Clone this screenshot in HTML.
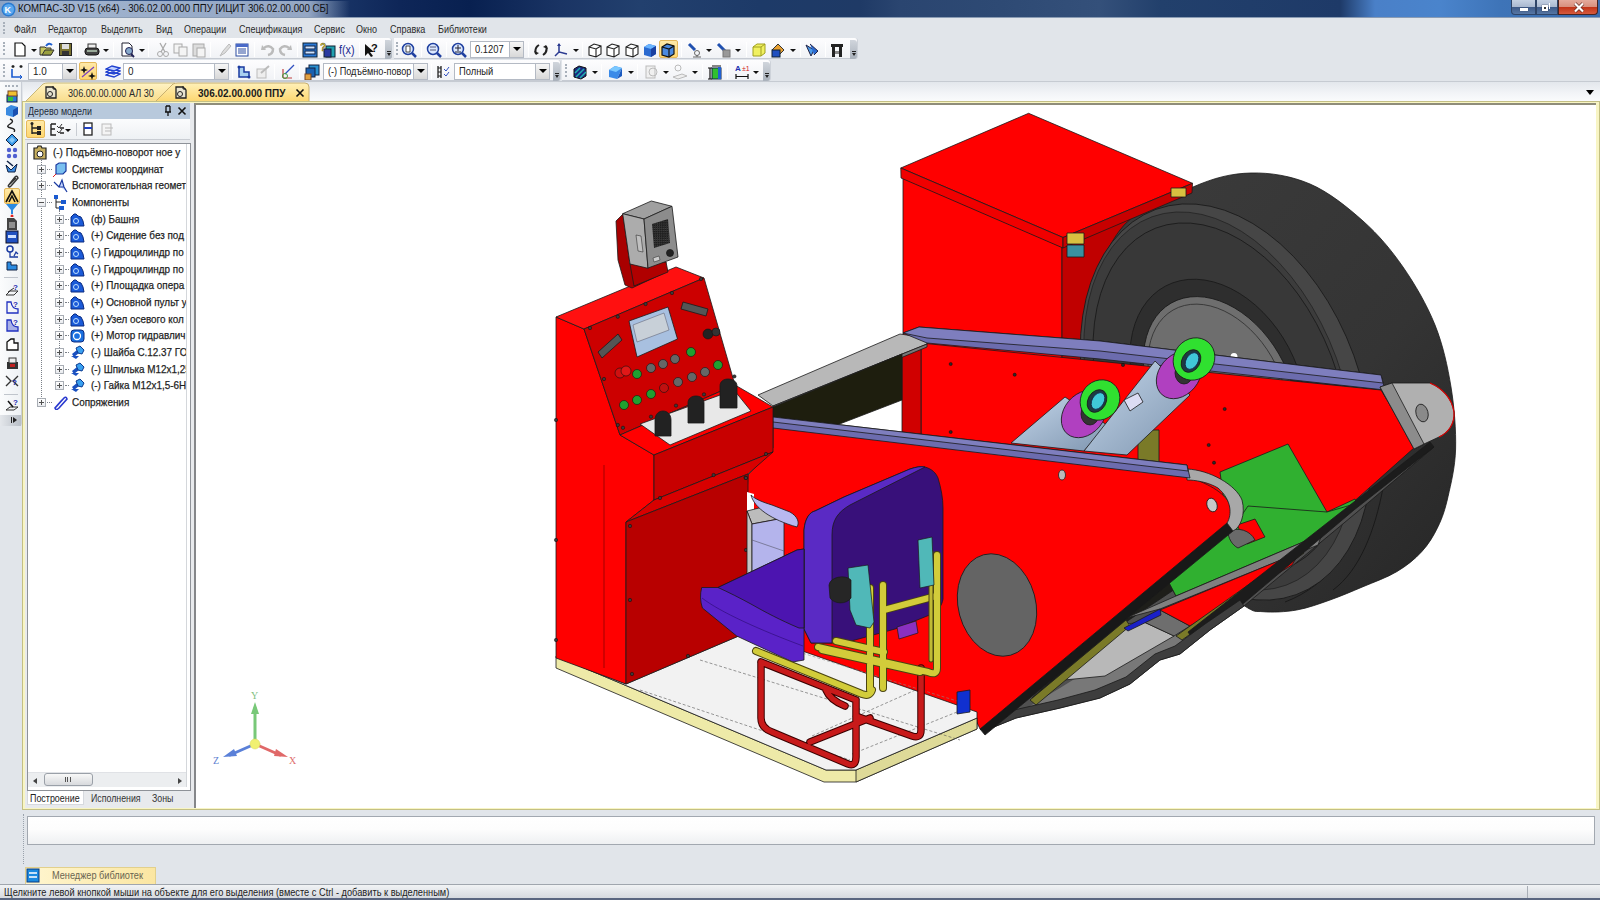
<!DOCTYPE html>
<html><head><meta charset="utf-8"><style>
*{margin:0;padding:0;box-sizing:border-box}
html,body{width:1600px;height:900px;overflow:hidden;background:#e1e5ea;font-family:"Liberation Sans",sans-serif;font-size:11px;color:#000}
.a{position:absolute}
.nw{white-space:nowrap;line-height:1}
.tr .nw{-webkit-text-stroke:0.25px currentColor}
.tb{position:absolute;height:21px;background:linear-gradient(#fdfdfe,#f1f3f6);border-bottom:1px solid #c6cbd3;border-right:1px solid #cdd2d9;border-radius:0 3px 3px 0}
.grip{position:absolute;width:2px;height:13px;border-left:2px dotted #a8b0ba}
.sep{position:absolute;width:1px;height:15px;background:#c8ccd2;border-right:1px solid #fff}
.combo{position:absolute;height:17px;background:#fff;border:1px solid #b4bac4;white-space:nowrap;overflow:hidden}
.combo b{position:absolute;right:0;top:0;width:14px;height:15px;background:linear-gradient(#f6f6f6,#d8d8d8);border-left:1px solid #b4bac4}
.combo b:after{content:"";position:absolute;left:3px;top:5px;border:4px solid transparent;border-top:4px solid #000;border-bottom:0}
.dd{position:absolute;width:0;height:0;border:3px solid transparent;border-top:3px solid #111;border-bottom:0}
.hl{position:absolute;background:linear-gradient(#ffe9a8,#ffd76e);border:1px solid #e5b85a;border-radius:2px}
.pm{position:absolute;width:9px;height:9px;border:1px solid #a8adb4;background:linear-gradient(#fff,#e8eaee)}
.pm:before{content:"";position:absolute;left:1px;top:3px;width:5px;height:1px;background:#505050}
.pm.p:after{content:"";position:absolute;left:3px;top:1px;width:1px;height:5px;background:#505050}
</style></head><body>
<div class="a" style="left:0;top:0;width:1600px;height:18px;background:linear-gradient(90deg,#4a6c9c 0.00%,#3b5a88 6.25%,#26467a 12.50%,#1a3668 20.62%,#0e2658 25.00%,#082050 29.38%,#1a3464 35.00%,#22406e 40.00%,#1d3a68 47.50%,#1f3a66 53.75%,#2a4570 56.25%,#2e4a74 62.50%,#34507a 68.75%,#22406c 72.50%,#1e3a68 83.75%,#4a80c8 85.94%,#4a84cc 90.00%,#3e74b8 93.75%,#3a6cae 100.00%)"></div>
<div class="a" style="left:0;top:1px;width:350px;height:16px;background:linear-gradient(90deg,rgba(190,205,228,0.55),rgba(200,214,234,0.7) 8%,rgba(200,214,234,0.7) 88%,rgba(200,214,234,0) 100%)"></div>
<div class="a" style="left:0;top:17px;width:1600px;height:1px;background:#8a9cb4"></div>
<svg class="a" style="left:1px;top:2px" width="15" height="15" viewBox="0 0 15 15"><circle cx="7.5" cy="7.5" r="7" fill="#2a7ad0"/><circle cx="7.5" cy="7.5" r="5.5" fill="#5aa8f0"/><text x="3.5" y="11" font-size="9" font-weight="bold" fill="#fff" font-family="Liberation Sans">K</text></svg>
<div class="a nw" style="left:18px;top:3px;font-size:11px;color:#111;transform:scaleX(0.88);transform-origin:0 0;">КОМПАС-3D V15 (x64) - 306.02.00.000 ППУ [ИЦИТ 306.02.00.000 СБ]</div>
<div class="a" style="left:1511px;top:0;width:25px;height:15px;border:1px solid #2e4468;border-top:0;border-radius:0 0 0 4px;background:linear-gradient(#c4d0e2,#aab9d0 48%,#3e5a88 52%,#5676a4)"></div>
<div class="a" style="left:1520px;top:8px;width:8px;height:3px;background:#fff;box-shadow:0 0 1px #223"></div>
<div class="a" style="left:1536px;top:0;width:22px;height:15px;border:1px solid #2e4468;border-top:0;background:linear-gradient(#c4d0e2,#aab9d0 48%,#3e5a88 52%,#5676a4)"></div>
<div class="a" style="left:1542px;top:5px;width:6px;height:6px;border:2px solid #fff;background:#333;box-shadow:0 0 1px #223"></div>
<div class="a" style="left:1549px;top:3px;width:1px;height:6px;background:#fff"></div>
<div class="a" style="left:1558px;top:0;width:40px;height:15px;border:1px solid #4a2420;border-top:0;border-radius:0 0 4px 0;background:linear-gradient(#e4aa9c,#d8907e 48%,#c23418 52%,#d65a3e)"></div>
<svg class="a" style="left:1573px;top:2px" width="12" height="11"><path d="M2,1.5 L10,9.5 M10,1.5 L2,9.5" stroke="#6a3028" stroke-width="3.6"/><path d="M2,1.5 L10,9.5 M10,1.5 L2,9.5" stroke="#fff" stroke-width="2.2"/></svg>
<div class="grip" style="left:3px;top:22px;height:12px"></div>
<div class="a nw" style="left:14px;top:24px;font-size:11px;color:#2a2a2a;transform:scaleX(0.82);transform-origin:0 0;">Файл</div>
<div class="a nw" style="left:48px;top:24px;font-size:11px;color:#2a2a2a;transform:scaleX(0.82);transform-origin:0 0;">Редактор</div>
<div class="a nw" style="left:101px;top:24px;font-size:11px;color:#2a2a2a;transform:scaleX(0.82);transform-origin:0 0;">Выделить</div>
<div class="a nw" style="left:156px;top:24px;font-size:11px;color:#2a2a2a;transform:scaleX(0.82);transform-origin:0 0;">Вид</div>
<div class="a nw" style="left:184px;top:24px;font-size:11px;color:#2a2a2a;transform:scaleX(0.82);transform-origin:0 0;">Операции</div>
<div class="a nw" style="left:239px;top:24px;font-size:11px;color:#2a2a2a;transform:scaleX(0.82);transform-origin:0 0;">Спецификация</div>
<div class="a nw" style="left:314px;top:24px;font-size:11px;color:#2a2a2a;transform:scaleX(0.82);transform-origin:0 0;">Сервис</div>
<div class="a nw" style="left:356px;top:24px;font-size:11px;color:#2a2a2a;transform:scaleX(0.82);transform-origin:0 0;">Окно</div>
<div class="a nw" style="left:390px;top:24px;font-size:11px;color:#2a2a2a;transform:scaleX(0.82);transform-origin:0 0;">Справка</div>
<div class="a nw" style="left:438px;top:24px;font-size:11px;color:#2a2a2a;transform:scaleX(0.82);transform-origin:0 0;">Библиотеки</div>
<div class="tb" style="left:0;top:38px;width:392px"></div>
<div class="tb" style="left:394px;top:38px;width:464px"></div>
<div class="tb" style="left:0;top:60px;width:561px"></div>
<div class="tb" style="left:562px;top:60px;width:209px"></div>
<div class="grip" style="left:3px;top:42px"></div>
<div class="grip" style="left:396px;top:42px"></div>
<div class="grip" style="left:3px;top:64px"></div>
<div class="grip" style="left:565px;top:64px"></div>
<div class="a" style="left:385px;top:40px;width:7px;height:19px;background:linear-gradient(#d0d5dc,#a9b1bb);border-radius:0 3px 3px 0"></div>
<div class="a" style="left:387px;top:53px;width:0;height:0;border:2px solid transparent;border-top:3px solid #222;border-bottom:0"></div>
<div class="a" style="left:387px;top:51px;width:4px;height:1px;background:#222"></div>
<div class="a" style="left:850px;top:40px;width:7px;height:19px;background:linear-gradient(#d0d5dc,#a9b1bb);border-radius:0 3px 3px 0"></div>
<div class="a" style="left:852px;top:53px;width:0;height:0;border:2px solid transparent;border-top:3px solid #222;border-bottom:0"></div>
<div class="a" style="left:852px;top:51px;width:4px;height:1px;background:#222"></div>
<div class="a" style="left:553px;top:62px;width:7px;height:19px;background:linear-gradient(#d0d5dc,#a9b1bb);border-radius:0 3px 3px 0"></div>
<div class="a" style="left:555px;top:75px;width:0;height:0;border:2px solid transparent;border-top:3px solid #222;border-bottom:0"></div>
<div class="a" style="left:555px;top:73px;width:4px;height:1px;background:#222"></div>
<div class="a" style="left:763px;top:62px;width:7px;height:19px;background:linear-gradient(#d0d5dc,#a9b1bb);border-radius:0 3px 3px 0"></div>
<div class="a" style="left:765px;top:75px;width:0;height:0;border:2px solid transparent;border-top:3px solid #222;border-bottom:0"></div>
<div class="a" style="left:765px;top:73px;width:4px;height:1px;background:#222"></div>
<div class="sep" style="left:77px;top:42px"></div>
<div class="sep" style="left:113px;top:42px"></div>
<div class="sep" style="left:148px;top:42px"></div>
<div class="sep" style="left:210px;top:42px"></div>
<div class="sep" style="left:254px;top:42px"></div>
<div class="sep" style="left:297px;top:42px"></div>
<div class="sep" style="left:359px;top:42px"></div>
<div class="sep" style="left:421px;top:42px"></div>
<div class="sep" style="left:446px;top:42px"></div>
<div class="sep" style="left:528px;top:42px"></div>
<div class="sep" style="left:582px;top:42px"></div>
<div class="sep" style="left:681px;top:42px"></div>
<div class="sep" style="left:746px;top:42px"></div>
<div class="sep" style="left:800px;top:42px"></div>
<div class="sep" style="left:825px;top:42px"></div>
<div class="sep" style="left:99px;top:64px"></div>
<div class="sep" style="left:232px;top:64px"></div>
<div class="sep" style="left:274px;top:64px"></div>
<div class="sep" style="left:299px;top:64px"></div>
<div class="sep" style="left:431px;top:64px"></div>
<div class="sep" style="left:601px;top:64px"></div>
<div class="sep" style="left:637px;top:64px"></div>
<div class="sep" style="left:702px;top:64px"></div>
<div class="sep" style="left:727px;top:64px"></div>
<div class="dd" style="left:31px;top:49px"></div>
<div class="dd" style="left:103px;top:49px"></div>
<div class="dd" style="left:139px;top:49px"></div>
<div class="dd" style="left:573px;top:49px"></div>
<div class="dd" style="left:706px;top:49px"></div>
<div class="dd" style="left:735px;top:49px"></div>
<div class="dd" style="left:790px;top:49px"></div>
<div class="dd" style="left:592px;top:71px"></div>
<div class="dd" style="left:628px;top:71px"></div>
<div class="dd" style="left:663px;top:71px"></div>
<div class="dd" style="left:692px;top:71px"></div>
<div class="dd" style="left:753px;top:71px"></div>
<div class="hl" style="left:659px;top:40px;width:19px;height:18px"></div>
<div class="hl" style="left:79px;top:62px;width:18px;height:18px"></div>
<div class="combo" style="left:28px;top:63px;width:49px"><b></b></div>
<div class="a nw" style="left:33px;top:66px;font-size:11px;color:#222;transform:scaleX(0.9);transform-origin:0 0;">1.0</div>
<div class="combo" style="left:123px;top:63px;width:106px"><b></b></div>
<div class="a nw" style="left:128px;top:66px;font-size:11px;color:#222;transform:scaleX(0.9);transform-origin:0 0;">0</div>
<div class="combo" style="left:323px;top:63px;width:105px"><b></b></div>
<div class="a nw" style="left:328px;top:66px;font-size:11px;color:#222;transform:scaleX(0.83);transform-origin:0 0;">(-) Подъёмно-повор</div>
<div class="combo" style="left:454px;top:63px;width:96px"><b></b></div>
<div class="a nw" style="left:459px;top:66px;font-size:11px;color:#222;transform:scaleX(0.85);transform-origin:0 0;">Полный</div>
<div class="combo" style="left:470px;top:41px;width:54px"><b></b></div>
<div class="a nw" style="left:475px;top:44px;font-size:11px;color:#222;transform:scaleX(0.85);transform-origin:0 0;">0.1207</div>
<svg class="a" style="left:13px;top:42px" width="16" height="16" viewBox="0 0 16 16"><path d="M2,1 H9 L12,4 V14 H2 Z" fill="#fff" stroke="#111" stroke-width="1.2"/></svg>
<svg class="a" style="left:39px;top:42px" width="16" height="16" viewBox="0 0 16 16"><path d="M1,5 H6 L7,6 H12 V13 H1 Z" fill="#c8c860" stroke="#333"/><path d="M3,13 L6,8 H15 L12,13 Z" fill="#9aa040" stroke="#333"/><path d="M7,4 Q10,0 13,3" stroke="#2060d0" stroke-width="2" fill="none"/></svg>
<svg class="a" style="left:58px;top:42px" width="16" height="16" viewBox="0 0 16 16"><rect x="1.5" y="1.5" width="12" height="12" fill="#7a7230" stroke="#222"/><rect x="4" y="2" width="7" height="5" fill="#ddd"/><rect x="4" y="9" width="7" height="4" fill="#333"/></svg>
<svg class="a" style="left:84px;top:42px" width="16" height="16" viewBox="0 0 16 16"><rect x="1" y="6" width="14" height="7" rx="3" fill="#444" stroke="#111"/><rect x="4" y="2" width="8" height="4" fill="#eee" stroke="#333"/><rect x="3" y="8" width="10" height="2" fill="#9a9"/></svg>
<svg class="a" style="left:120px;top:42px" width="16" height="16" viewBox="0 0 16 16"><path d="M2,1 H9 L12,4 V14 H2 Z" fill="#fff" stroke="#223"/><circle cx="9" cy="9" r="3.5" fill="#8ac" stroke="#225"/><path d="M11,12 L14,15" stroke="#225" stroke-width="2"/></svg>
<svg class="a" style="left:156px;top:42px" width="16" height="16" viewBox="0 0 16 16"><circle cx="4" cy="12" r="2.5" fill="none" stroke="#aaa"/><circle cx="10" cy="12" r="2.5" fill="none" stroke="#aaa"/><path d="M5,10 L10,1 M9,10 L4,1" stroke="#aaa" stroke-width="1.3"/></svg>
<svg class="a" style="left:173px;top:42px" width="16" height="16" viewBox="0 0 16 16"><rect x="1" y="2" width="8" height="9" fill="#f4f4f4" stroke="#aaa"/><rect x="6" y="5" width="8" height="9" fill="#f4f4f4" stroke="#aaa"/></svg>
<svg class="a" style="left:191px;top:42px" width="16" height="16" viewBox="0 0 16 16"><rect x="2" y="2" width="11" height="12" fill="#ddd" stroke="#aaa"/><rect x="6" y="6" width="8" height="9" fill="#f4f4f4" stroke="#aaa"/></svg>
<svg class="a" style="left:217px;top:42px" width="16" height="16" viewBox="0 0 16 16"><path d="M3,14 L6,9 L12,2 L14,4 L8,11 Z" fill="#ddd" stroke="#bbb"/></svg>
<svg class="a" style="left:234px;top:42px" width="16" height="16" viewBox="0 0 16 16"><rect x="2" y="2" width="12" height="12" fill="#fff" stroke="#2a4aa0"/><rect x="2" y="2" width="12" height="3" fill="#4a6ac8"/><path d="M4,7 H12 M4,9 H12 M4,11 H12" stroke="#2a4aa0"/></svg>
<svg class="a" style="left:260px;top:42px" width="16" height="16" viewBox="0 0 16 16"><path d="M4,6 Q9,2 13,7 Q13,12 8,13" fill="none" stroke="#bbb" stroke-width="2.5"/><path d="M2,3 L6,8 L1,8 Z" fill="#bbb"/></svg>
<svg class="a" style="left:277px;top:42px" width="16" height="16" viewBox="0 0 16 16"><path d="M12,6 Q7,2 3,7 Q3,12 8,13" fill="none" stroke="#bbb" stroke-width="2.5"/><path d="M14,3 L10,8 L15,8 Z" fill="#bbb"/></svg>
<svg class="a" style="left:302px;top:42px" width="16" height="16" viewBox="0 0 16 16"><rect x="1" y="1" width="14" height="14" fill="#2a7ad8" stroke="#123"/><rect x="3" y="4" width="10" height="3" fill="#cfe4ff" stroke="#124"/><rect x="3" y="9" width="10" height="3" fill="#cfe4ff" stroke="#124"/></svg>
<svg class="a" style="left:320px;top:42px" width="16" height="16" viewBox="0 0 16 16"><rect x="6" y="4" width="9" height="11" fill="#20a0b0" stroke="#123"/><rect x="4" y="7" width="7" height="8" fill="#2a3aa0" stroke="#123"/><text x="0" y="9" font-size="10" font-weight="bold" fill="#e8d020" stroke="#333" stroke-width="0.4" font-family="Liberation Sans">?</text></svg>
<svg class="a" style="left:339px;top:42px" width="18" height="16" viewBox="0 0 18 16"><text x="0" y="12" font-size="12" fill="#1a2a90" font-family="Liberation Sans" transform="scale(0.9,1)">f(x)</text></svg>
<svg class="a" style="left:363px;top:42px" width="16" height="16" viewBox="0 0 16 16"><path d="M2,2 L2,14 L5,11 L8,15 L10,14 L7,10 L11,10 Z" fill="#111"/><text x="8" y="10" font-size="11" font-weight="bold" fill="#111" font-family="Liberation Sans">?</text></svg>
<svg class="a" style="left:401px;top:42px" width="16" height="16" viewBox="0 0 16 16"><circle cx="7" cy="7" r="5.5" fill="#dbe8ff" stroke="#2040a0" stroke-width="1.5"/><path d="M5,4 H9 V10 H5 Z" fill="#fff" stroke="#222" stroke-width="0.8"/><path d="M11,11 L15,15" stroke="#2040a0" stroke-width="2.5"/></svg>
<svg class="a" style="left:426px;top:42px" width="16" height="16" viewBox="0 0 16 16"><circle cx="7" cy="7" r="5.5" fill="#dbe8ff" stroke="#2040a0" stroke-width="1.5"/><path d="M4,5 H10 M4,8 H10" stroke="#335" stroke-width="0.8"/><path d="M11,11 L15,15" stroke="#2040a0" stroke-width="2.5"/></svg>
<svg class="a" style="left:451px;top:42px" width="16" height="16" viewBox="0 0 16 16"><circle cx="7" cy="7" r="5.5" fill="#dbe8ff" stroke="#2040a0" stroke-width="1.5"/><path d="M4,6 H10 M7,3 V9 M4,10 H10" stroke="#223" stroke-width="1"/><path d="M11,11 L15,15" stroke="#2040a0" stroke-width="2.5"/></svg>
<svg class="a" style="left:533px;top:42px" width="16" height="16" viewBox="0 0 16 16"><path d="M6,3 Q1,6 3,12 M10,13 Q15,10 13,4" fill="none" stroke="#222" stroke-width="2"/><path d="M3,13 L1,9 L6,11 Z M13,3 L15,7 L10,5 Z" fill="#222"/></svg>
<svg class="a" style="left:553px;top:42px" width="16" height="16" viewBox="0 0 16 16"><path d="M6,2 V10 L14,12 M6,10 L2,14" stroke="#2a3a90" stroke-width="1.5" fill="none"/><path d="M4,4 L6,1 L8,4 Z" fill="#2a3a90"/></svg>
<svg class="a" style="left:587px;top:42px" width="16" height="16" viewBox="0 0 16 16"><path d="M2,5 L7,2 L14,4 L14,12 L9,15 L2,13 Z M2,5 L9,7 L14,4 M9,7 V15" fill="#fff" stroke="#222" stroke-width="1.1"/></svg>
<svg class="a" style="left:605px;top:42px" width="16" height="16" viewBox="0 0 16 16"><path d="M2,5 L7,2 L14,4 L14,12 L9,15 L2,13 Z M2,5 L9,7 L14,4 M9,7 V15" fill="#fff" stroke="#222" stroke-width="1.1"/></svg>
<svg class="a" style="left:624px;top:42px" width="16" height="16" viewBox="0 0 16 16"><path d="M2,5 L7,2 L14,4 L14,12 L9,15 L2,13 Z M2,5 L9,7 L14,4 M9,7 V15" fill="#fff" stroke="#222" stroke-width="1.1"/></svg>
<svg class="a" style="left:642px;top:42px" width="16" height="16" viewBox="0 0 16 16"><path d="M2,5 L7,2 L14,4 L14,12 L9,15 L2,13 Z" fill="#2a6ad0"/><path d="M2,5 L7,2 L14,4 L9,7 Z" fill="#6ab4ff"/><path d="M9,7 L14,4 L14,12 L9,15 Z" fill="#1a40a0"/></svg>
<svg class="a" style="left:660px;top:42px" width="16" height="16" viewBox="0 0 16 16"><path d="M2,5 L7,2 L14,4 L14,12 L9,15 L2,13 Z" fill="#4a8ae0" stroke="#111" stroke-width="1.2"/><path d="M2,5 L9,7 L14,4 M9,7 V15" fill="none" stroke="#111" stroke-width="1.2"/></svg>
<svg class="a" style="left:687px;top:42px" width="16" height="16" viewBox="0 0 16 16"><path d="M2,2 L8,8" stroke="#2050b0" stroke-width="3"/><circle cx="10" cy="11" r="2.5" fill="none" stroke="#666"/><path d="M10,13 V15 M6,15 H14" stroke="#666"/></svg>
<svg class="a" style="left:716px;top:42px" width="16" height="16" viewBox="0 0 16 16"><path d="M2,2 L9,9" stroke="#2050b0" stroke-width="3"/><rect x="7" y="8" width="7" height="7" fill="#999" stroke="#777"/></svg>
<svg class="a" style="left:751px;top:42px" width="16" height="16" viewBox="0 0 16 16"><path d="M2,5 L6,2 L14,2 L14,11 L10,14 L2,14 Z" fill="#f0f060" stroke="#a0a020"/><path d="M2,5 H10 L14,2 M10,5 V14" fill="none" stroke="#a0a020"/></svg>
<svg class="a" style="left:770px;top:42px" width="16" height="16" viewBox="0 0 16 16"><path d="M2,8 L8,2 L14,8 L8,14 Z" fill="#e8a030" stroke="#333"/><rect x="2" y="8" width="8" height="7" fill="#2050c0" stroke="#123"/></svg>
<svg class="a" style="left:804px;top:42px" width="16" height="16" viewBox="0 0 16 16"><path d="M2,3 L10,8 L7,14 Z" fill="#4a9ae8" stroke="#224"/><path d="M6,2 L14,9 L10,13" fill="#2a6ad0" stroke="#224"/></svg>
<svg class="a" style="left:829px;top:42px" width="16" height="16" viewBox="0 0 16 16"><rect x="2" y="2" width="12" height="3" fill="#222"/><rect x="3" y="5" width="3" height="10" fill="#222"/><rect x="10" y="5" width="3" height="10" fill="#222"/><rect x="6" y="9" width="4" height="3" fill="#888"/></svg>
<svg class="a" style="left:9px;top:64px" width="16" height="16" viewBox="0 0 16 16"><path d="M4,1 V4 M2.5,2.5 H5.5 M12,1 V4 M10.5,2.5 H13.5" stroke="#222" stroke-width="1.3"/><path d="M3,5 V13 H13" stroke="#1a5ad0" stroke-width="1.6" fill="none"/><path d="M11,11 L13,13 L11,15" stroke="#1a5ad0" fill="none"/></svg>
<svg class="a" style="left:80px;top:64px" width="16" height="16" viewBox="0 0 16 16"><path d="M2,13 L14,3" stroke="#7a40c0" stroke-width="1.2"/><path d="M4,2 L5,5 L8,6 L5,7 L4,10 L3,7 L0,6 L3,5 Z M12,8 L13,11 L16,12 L13,13 L12,16 L11,13 L8,12 L11,11 Z" fill="#111"/></svg>
<svg class="a" style="left:105px;top:64px" width="16" height="16" viewBox="0 0 16 16"><path d="M1,11 L7,8 L15,10 L9,13 Z" fill="none" stroke="#2040d0" stroke-width="1.3"/><path d="M1,8 L7,5 L15,7 L9,10 Z" fill="none" stroke="#2040d0" stroke-width="1.3"/><path d="M1,5 L7,2 L15,4 L9,7 Z" fill="#c0d0ff" stroke="#2040d0" stroke-width="1.3"/></svg>
<svg class="a" style="left:236px;top:64px" width="16" height="16" viewBox="0 0 16 16"><path d="M3,3 V13 H13 V8 H8 V3 Z" fill="#a8d0f0" stroke="#1a3aa0" stroke-width="1.5"/><circle cx="3" cy="3" r="1.5" fill="#1a3aa0"/><circle cx="13" cy="13" r="1.5" fill="#1a3aa0"/></svg>
<svg class="a" style="left:255px;top:64px" width="16" height="16" viewBox="0 0 16 16"><rect x="2" y="5" width="9" height="9" fill="#eee" stroke="#bbb"/><path d="M6,9 L14,2" stroke="#bbb" stroke-width="2"/></svg>
<svg class="a" style="left:280px;top:64px" width="16" height="16" viewBox="0 0 16 16"><path d="M3,14 V5 M3,14 L12,14" stroke="#c04040" stroke-width="1.2"/><path d="M5,10 L10,5 L14,1" stroke="#3050c0" stroke-width="1.2" fill="none"/><circle cx="5" cy="12" r="2.5" fill="none" stroke="#40a040"/></svg>
<svg class="a" style="left:304px;top:64px" width="16" height="16" viewBox="0 0 16 16"><rect x="5" y="1" width="10" height="10" fill="#2a90d0" stroke="#124"/><rect x="2" y="4" width="9" height="9" fill="#1a60b0" stroke="#124"/><rect x="1" y="10" width="6" height="6" fill="#e0a040" stroke="#742"/></svg>
<svg class="a" style="left:436px;top:64px" width="16" height="16" viewBox="0 0 16 16"><path d="M2,2 V14 M5,2 V14" stroke="#222" stroke-width="1.3"/><path d="M2,4 H5 M2,8 H5 M2,12 H5" stroke="#222"/><path d="M8,5 L10,7 L13,3 M8,10 L10,12 L13,8" stroke="#3050c0" fill="none"/></svg>
<svg class="a" style="left:572px;top:64px" width="16" height="16" viewBox="0 0 16 16"><path d="M2,5 L7,2 L14,4 L14,12 L9,15 L2,13 Z" fill="#1a2a80" stroke="#111"/><path d="M3,9 L8,4 M4,13 L12,5 M8,14 L14,8" stroke="#20b0b0" stroke-width="1.5"/></svg>
<svg class="a" style="left:607px;top:64px" width="16" height="16" viewBox="0 0 16 16"><path d="M2,6 L8,2 L15,4 L10,15 L2,13 Z" fill="#3a8ae8"/><path d="M10,15 L15,4 L15,12 Z" fill="#1a5ac0"/><path d="M2,6 L8,2 L15,4 L9,8 Z" fill="#7ac8ff"/></svg>
<svg class="a" style="left:644px;top:64px" width="16" height="16" viewBox="0 0 16 16"><rect x="2" y="2" width="9" height="12" fill="#f0f0f0" stroke="#bbb"/><circle cx="9" cy="8" r="4" fill="none" stroke="#bbb"/></svg>
<svg class="a" style="left:672px;top:64px" width="16" height="16" viewBox="0 0 16 16"><circle cx="6" cy="4" r="3" fill="none" stroke="#bbb"/><path d="M1,13 L10,10 L15,12 L6,15 Z" fill="#eee" stroke="#bbb"/></svg>
<svg class="a" style="left:707px;top:64px" width="16" height="16" viewBox="0 0 16 16"><rect x="5" y="4" width="9" height="11" fill="#30c030" stroke="#124"/><rect x="11" y="3" width="3" height="12" fill="#2060d0"/><path d="M3,4 V15 M1,4 H5 M1,15 H5 M5,2 H14" stroke="#111" stroke-width="1.2"/></svg>
<svg class="a" style="left:734px;top:64px" width="16" height="16" viewBox="0 0 16 16"><text x="1" y="7" font-size="8" fill="#2030b0" font-family="Liberation Sans" font-weight="bold">A</text><text x="8" y="7" font-size="7" fill="#d02020" font-family="Liberation Sans">±1</text><path d="M2,10 V15 M14,10 V15 M2,12.5 H14" stroke="#111" stroke-width="1.2"/></svg>
<div class="a" style="left:0;top:81px;width:1600px;height:1px;background:#c6cbd2"></div>
<div class="a" style="left:0;top:82px;width:22px;height:344px;background:linear-gradient(90deg,#fbfcfd,#eef1f4);border-right:1px solid #c9ced6;border-bottom:1px solid #c9ced6;border-radius:0 0 3px 0"></div>
<div class="a" style="left:5px;top:85px;width:13px;height:2px;border-top:2px dotted #a8b0ba"></div>
<div class="a" style="left:0;top:415px;width:21px;height:11px;background:linear-gradient(90deg,#e4e7eb,#b8bec6)"></div>
<div class="a" style="left:13px;top:417px;width:0;height:0;border:3px solid transparent;border-left:4px solid #222;border-right:0"></div>
<div class="a" style="left:11px;top:417px;width:1px;height:6px;background:#222"></div>
<div class="hl" style="left:4px;top:188px;width:16px;height:16px"></div>
<div class="a" style="left:4px;top:277px;width:14px;height:1px;background:#c0c5cc"></div>
<div class="a" style="left:4px;top:394px;width:14px;height:1px;background:#c0c5cc"></div>
<svg class="a" style="left:5px;top:89px" width="14" height="14" viewBox="0 0 14 14"><rect x="2" y="6" width="10" height="7" fill="#2a7ad8" stroke="#124"/><rect x="3" y="2" width="9" height="5" fill="#f0c030" stroke="#742"/><rect x="3" y="8" width="5" height="4" fill="#30c040"/></svg>
<svg class="a" style="left:5px;top:104px" width="14" height="14" viewBox="0 0 14 14"><path d="M1,4 L6,1 L13,3 L13,10 L8,13 L1,11 Z" fill="#3a8ae0"/><path d="M8,6 L13,3 L13,10 L8,13 Z" fill="#1a50b0"/></svg>
<svg class="a" style="left:5px;top:118px" width="14" height="14" viewBox="0 0 14 14"><path d="M5,1 Q10,3 5,6 Q0,9 6,10 Q11,11 9,14" fill="none" stroke="#222" stroke-width="1.4"/></svg>
<svg class="a" style="left:5px;top:133px" width="14" height="14" viewBox="0 0 14 14"><path d="M1,7 L7,1 L13,7 L7,13 Z" fill="#3a9ae8" stroke="#124"/><path d="M4,7 L7,4 L10,7 L7,10 Z" fill="#8acaf8"/></svg>
<svg class="a" style="left:5px;top:146px" width="14" height="14" viewBox="0 0 14 14"><circle cx="4" cy="4" r="2.2" fill="#5060d0"/><circle cx="10" cy="4" r="2.2" fill="#5060d0"/><circle cx="4" cy="10" r="2.2" fill="#5060d0"/><circle cx="10" cy="10" r="2.2" fill="#5060d0"/></svg>
<svg class="a" style="left:5px;top:160px" width="14" height="14" viewBox="0 0 14 14"><path d="M1,5 L6,10 L12,4 L10,12 L3,12 Z" fill="#3a8ae0" stroke="#124"/><path d="M2,1 L8,6" stroke="#124" stroke-width="1.5"/></svg>
<svg class="a" style="left:5px;top:174px" width="14" height="14" viewBox="0 0 14 14"><path d="M3,12 L10,3 Q12,1 13,4 L6,12 Q4,14 3,12 M5,10 L11,4" fill="none" stroke="#333" stroke-width="1.4"/></svg>
<svg class="a" style="left:5px;top:189px" width="14" height="14" viewBox="0 0 14 14"><path d="M1,13 L7,2 L13,13 M4,13 L7,7 L10,13" fill="none" stroke="#111" stroke-width="1.6"/></svg>
<svg class="a" style="left:5px;top:203px" width="14" height="14" viewBox="0 0 14 14"><path d="M1,1 H13 L8,7 V11 H6 V7 Z" fill="#2a8ae0"/><circle cx="7" cy="13" r="1.5" fill="#e02020"/></svg>
<svg class="a" style="left:5px;top:217px" width="14" height="14" viewBox="0 0 14 14"><path d="M2,1 H9 L12,4 V13 H2 Z" fill="#444"/><path d="M4,6 H10 M4,8 H10 M4,10 H10" stroke="#ddd"/></svg>
<svg class="a" style="left:5px;top:230px" width="14" height="14" viewBox="0 0 14 14"><rect x="1" y="1" width="12" height="12" fill="#2050c0" stroke="#112"/><rect x="3" y="5" width="8" height="3" fill="#d0e0ff"/></svg>
<svg class="a" style="left:5px;top:245px" width="14" height="14" viewBox="0 0 14 14"><circle cx="5" cy="4" r="3" fill="none" stroke="#1a3aa0" stroke-width="1.5"/><path d="M5,7 V12 H13 M9,11 L11,7 L13,9" stroke="#1a3aa0" stroke-width="1.3" fill="none"/></svg>
<svg class="a" style="left:5px;top:259px" width="14" height="14" viewBox="0 0 14 14"><path d="M2,3 V11 H12 V6 H6 V3 Z" fill="#2a8ae0" stroke="#124"/></svg>
<svg class="a" style="left:5px;top:283px" width="14" height="14" viewBox="0 0 14 14"><path d="M1,12 L5,8 H13 L9,12 Z" fill="none" stroke="#333"/><path d="M3,9 L9,5" stroke="#333"/><text x="8" y="7" font-size="8" font-weight="bold" fill="#1a2ab0" font-family="Liberation Sans">?</text></svg>
<svg class="a" style="left:5px;top:300px" width="14" height="14" viewBox="0 0 14 14"><path d="M2,2 V13 H13 V9 Q7,9 6,2 Z" fill="none" stroke="#2030c0" stroke-width="1.3"/><text x="8" y="7" font-size="8" font-weight="bold" fill="#1a2ab0" font-family="Liberation Sans">?</text></svg>
<svg class="a" style="left:5px;top:318px" width="14" height="14" viewBox="0 0 14 14"><path d="M2,2 V13 H13 V9 Q7,9 6,2 Z" fill="#a8b0e8" stroke="#2030c0" stroke-width="1.3"/><text x="8" y="7" font-size="8" font-weight="bold" fill="#1a2ab0" font-family="Liberation Sans">?</text></svg>
<svg class="a" style="left:5px;top:337px" width="14" height="14" viewBox="0 0 14 14"><path d="M2,5 L6,2 H9 V6 H13 V13 H2 Z" fill="#fff" stroke="#111" stroke-width="1.3"/></svg>
<svg class="a" style="left:5px;top:356px" width="14" height="14" viewBox="0 0 14 14"><rect x="2" y="6" width="11" height="7" fill="#333"/><rect x="4" y="2" width="7" height="5" fill="#eee" stroke="#333"/><rect x="5" y="8" width="5" height="3" fill="#c02020"/></svg>
<svg class="a" style="left:5px;top:374px" width="14" height="14" viewBox="0 0 14 14"><path d="M1,2 L6,7 L1,12 M13,2 L8,7 L13,12" fill="none" stroke="#333" stroke-width="1.4"/><text x="7" y="11" font-size="8" font-weight="bold" fill="#1a2ab0" font-family="Liberation Sans">?</text></svg>
<svg class="a" style="left:5px;top:398px" width="14" height="14" viewBox="0 0 14 14"><path d="M1,12 L5,9 H13 L9,12 Z" fill="none" stroke="#333"/><path d="M3,3 L8,9" stroke="#111" stroke-width="1.5"/><text x="8" y="7" font-size="8" font-weight="bold" fill="#1a2ab0" font-family="Liberation Sans">?</text></svg>
<div class="a" style="left:23px;top:82px;width:1577px;height:20px;background:linear-gradient(#e3e7ec,#f2f4f7 55%,#fbfcfd)"></div>
<svg class="a" style="left:23px;top:82px" width="300" height="21" viewBox="0 0 300 21"><path d="M2,20 L20,2 Q22,1 25,1 L152,1 L134,20 Z" fill="url(#tg)" stroke="#c8b878" stroke-width="1"/><path d="M132,20 L150,2 Q152,1 155,1 L282,1 Q286,1 286,5 L286,20 Z" fill="url(#tg2)" stroke="#c8b070" stroke-width="1"/><defs><linearGradient id="tg" x1="0" y1="0" x2="0" y2="1"><stop offset="0" stop-color="#fff3c4"/><stop offset="1" stop-color="#f8dc8a"/></linearGradient><linearGradient id="tg2" x1="0" y1="0" x2="0" y2="1"><stop offset="0" stop-color="#fff0b8"/><stop offset="1" stop-color="#fcd66e"/></linearGradient></defs></svg>
<svg class="a" style="left:44px;top:85px" width="14" height="14" viewBox="0 0 14 14"><path d="M2,2 H9 L12,5 V13 H2 Z" fill="#e8e4d0" stroke="#222" stroke-width="1.3"/><circle cx="6" cy="9" r="2.5" fill="none" stroke="#222"/><path d="M9,1 V4 H12" fill="none" stroke="#222"/></svg>
<svg class="a" style="left:174px;top:85px" width="14" height="14" viewBox="0 0 14 14"><path d="M2,2 H9 L12,5 V13 H2 Z" fill="#e8e4d0" stroke="#222" stroke-width="1.3"/><circle cx="6" cy="9" r="2.5" fill="none" stroke="#222"/><path d="M9,1 V4 H12" fill="none" stroke="#222"/></svg>
<div class="a nw" style="left:68px;top:88px;font-size:11px;color:#2a2a2a;transform:scaleX(0.83);transform-origin:0 0;">306.00.00.000 АЛ 30</div>
<div class="a nw" style="left:198px;top:88px;font-size:11px;color:#1a1a1a;font-weight:bold;transform:scaleX(0.91);transform-origin:0 0;">306.02.00.000 ППУ</div>
<svg class="a" style="left:295px;top:88px" width="10" height="10"><path d="M1.5,1.5 L8.5,8.5 M8.5,1.5 L1.5,8.5" stroke="#111" stroke-width="1.6"/></svg>
<div class="a" style="left:1586px;top:90px;width:0;height:0;border:4px solid transparent;border-top:5px solid #000;border-bottom:0"></div>
<div class="a" style="left:22px;top:101px;width:1578px;height:709px;background:#f8f5c4;border:1px solid #c4c084"></div>
<div class="a" style="left:25px;top:103px;width:170px;height:705px;background:#e8eaed"></div>
<div class="a" style="left:25px;top:103px;width:165px;height:16px;background:#b8c9dc"></div>
<div class="a nw" style="left:28px;top:106px;font-size:11px;color:#1e2a38;transform:scaleX(0.81);transform-origin:0 0;">Дерево модели</div>
<svg class="a" style="left:163px;top:105px" width="10" height="11"><path d="M3,1 V7 M7,1 V7 M2,7 H8 M5,7 V11 M3,1 H7" stroke="#111" stroke-width="1.3" fill="none"/></svg>
<svg class="a" style="left:177px;top:106px" width="10" height="10"><path d="M1.5,1.5 L8.5,8.5 M8.5,1.5 L1.5,8.5" stroke="#111" stroke-width="1.6"/></svg>
<div class="a" style="left:25px;top:119px;width:165px;height:20px;background:linear-gradient(#fbfcfd,#eef1f4)"></div>
<div class="hl" style="left:26px;top:120px;width:19px;height:18px"></div>
<svg class="a" style="left:28px;top:121px" width="16" height="16"><path d="M4,2 V13 M4,7 H9 M4,12 H9" stroke="#222" stroke-width="1.4"/><circle cx="4" cy="2.5" r="1.5" fill="#222"/><rect x="9" y="5" width="4" height="4" fill="#222"/><rect x="9" y="10" width="4" height="4" fill="#222"/></svg>
<svg class="a" style="left:49px;top:122px" width="16" height="15"><path d="M2,2 H7 M2,2 V13 H7 M2,7 H6" stroke="#222" stroke-width="1.4" fill="none"/><path d="M8,4 L10,6 L13,2 M8,9 L10,11 L13,7" stroke="#333" fill="none"/><path d="M11,6 H15 M11,11 H15" stroke="#222" stroke-width="1.5"/></svg>
<div class="dd" style="left:65px;top:129px"></div>
<div class="a" style="left:76px;top:123px;width:1px;height:13px;background:#c8ccd2"></div>
<svg class="a" style="left:82px;top:122px" width="12" height="14"><rect x="2" y="1" width="8" height="12" fill="#fff" stroke="#222" stroke-width="1.3"/><path d="M2,6 H10" stroke="#2040c0" stroke-width="2"/></svg>
<svg class="a" style="left:100px;top:122px" width="14" height="14"><rect x="2" y="2" width="9" height="11" fill="#f4f4f4" stroke="#bbb"/><path d="M5,6 H13 M5,9 H11" stroke="#bbb"/></svg>
<div class="a" style="left:25px;top:139px;width:165px;height:1px;background:#c9cdd3"></div>
<div class="a" style="left:27px;top:143px;width:164px;height:648px;background:#fff;border:1px solid #8e9298;box-shadow:inset -3px -3px 0 #fff,inset -4px -4px 0 #d4d7db"></div>
<div class="a" style="left:41px;top:160px;width:1px;height:243px;border-left:1px dotted #7a8088"></div>
<div class="a" style="left:59px;top:210px;width:1px;height:176px;border-left:1px dotted #7a8088"></div>
<svg class="a" style="left:33px;top:145px" width="15" height="15" viewBox="0 0 15 15"><path d="M1,3 H4 L5,1 H8 L9,3 H13 V14 H1 Z" fill="#c8b060" stroke="#222" stroke-width="1.2"/><circle cx="7" cy="9" r="3" fill="#fff" stroke="#222"/></svg>
<div class="a tr" style="left:53px;top:147px;width:133px;height:13px;overflow:hidden"><div class="a nw" style="left:0px;top:0px;font-size:11px;color:#1e1e1e;transform:scaleX(0.9);transform-origin:0 0;">(-) Подъёмно-поворот ное  у</div></div>
<div class="pm p" style="left:37px;top:165px"></div>
<div class="a" style="left:47px;top:169px;width:5px;border-top:1px dotted #7a8088"></div>
<svg class="a" style="left:53px;top:162px" width="15" height="15" viewBox="0 0 15 15"><path d="M3,3 L6,1 H13 V9 L10,12 H3 Z" fill="#7ac0f0" stroke="#1a3aa0" stroke-width="1.2"/><path d="M3,12 L0,15" stroke="#e02020"/></svg>
<div class="a tr" style="left:72px;top:164px;width:114px;height:13px;overflow:hidden"><div class="a nw" style="left:0px;top:0px;font-size:11px;color:#1e1e1e;transform:scaleX(0.9);transform-origin:0 0;">Системы координат</div></div>
<div class="pm p" style="left:37px;top:181px"></div>
<div class="a" style="left:47px;top:185px;width:5px;border-top:1px dotted #7a8088"></div>
<svg class="a" style="left:53px;top:178px" width="15" height="15" viewBox="0 0 15 15"><path d="M1,4 L6,9 L9,2 L11,9 L14,14 M6,9 L11,9" fill="#c8d8ff" stroke="#1a3aa0" stroke-width="1.2"/></svg>
<div class="a tr" style="left:72px;top:180px;width:114px;height:13px;overflow:hidden"><div class="a nw" style="left:0px;top:0px;font-size:11px;color:#1e1e1e;transform:scaleX(0.9);transform-origin:0 0;">Вспомогательная геомет</div></div>
<div class="pm " style="left:37px;top:198px"></div>
<div class="a" style="left:47px;top:202px;width:5px;border-top:1px dotted #7a8088"></div>
<svg class="a" style="left:53px;top:195px" width="15" height="15" viewBox="0 0 15 15"><rect x="1" y="0" width="4" height="4" fill="#1a5ad0"/><rect x="8" y="5" width="5" height="4" fill="#1a5ad0"/><rect x="6" y="11" width="5" height="4" fill="#1a5ad0"/><path d="M3,4 V13 H6 M3,7 H8" stroke="#222" fill="none"/></svg>
<div class="a tr" style="left:72px;top:197px;width:114px;height:13px;overflow:hidden"><div class="a nw" style="left:0px;top:0px;font-size:11px;color:#1e1e1e;transform:scaleX(0.9);transform-origin:0 0;">Компоненты</div></div>
<div class="pm p" style="left:55px;top:215px"></div>
<div class="a" style="left:65px;top:219px;width:4px;border-top:1px dotted #7a8088"></div>
<svg class="a" style="left:70px;top:212px" width="15" height="15" viewBox="0 0 15 15"><path d="M1,14 V5 L4,2 H6 L8,4 L11,5 L13,9 L14,14 Z" fill="#1a5ad8" stroke="#0a2a80" stroke-width="1"/><circle cx="6" cy="9" r="2.5" fill="none" stroke="#bfe0ff"/></svg>
<div class="a tr" style="left:91px;top:214px;width:95px;height:13px;overflow:hidden"><div class="a nw" style="left:0px;top:0px;font-size:11px;color:#1e1e1e;transform:scaleX(0.9);transform-origin:0 0;">(ф) Башня</div></div>
<div class="pm p" style="left:55px;top:231px"></div>
<div class="a" style="left:65px;top:235px;width:4px;border-top:1px dotted #7a8088"></div>
<svg class="a" style="left:70px;top:228px" width="15" height="15" viewBox="0 0 15 15"><path d="M1,14 V5 L4,2 H6 L8,4 L11,5 L13,9 L14,14 Z" fill="#1a5ad8" stroke="#0a2a80" stroke-width="1"/><circle cx="6" cy="9" r="2.5" fill="none" stroke="#bfe0ff"/></svg>
<div class="a tr" style="left:91px;top:230px;width:95px;height:13px;overflow:hidden"><div class="a nw" style="left:0px;top:0px;font-size:11px;color:#1e1e1e;transform:scaleX(0.9);transform-origin:0 0;">(+)  Сидение без под</div></div>
<div class="pm p" style="left:55px;top:248px"></div>
<div class="a" style="left:65px;top:252px;width:4px;border-top:1px dotted #7a8088"></div>
<svg class="a" style="left:70px;top:245px" width="15" height="15" viewBox="0 0 15 15"><path d="M1,14 V5 L4,2 H6 L8,4 L11,5 L13,9 L14,14 Z" fill="#1a5ad8" stroke="#0a2a80" stroke-width="1"/><circle cx="6" cy="9" r="2.5" fill="none" stroke="#bfe0ff"/></svg>
<div class="a tr" style="left:91px;top:247px;width:95px;height:13px;overflow:hidden"><div class="a nw" style="left:0px;top:0px;font-size:11px;color:#1e1e1e;transform:scaleX(0.9);transform-origin:0 0;">(-) Гидроцилиндр по</div></div>
<div class="pm p" style="left:55px;top:265px"></div>
<div class="a" style="left:65px;top:269px;width:4px;border-top:1px dotted #7a8088"></div>
<svg class="a" style="left:70px;top:262px" width="15" height="15" viewBox="0 0 15 15"><path d="M1,14 V5 L4,2 H6 L8,4 L11,5 L13,9 L14,14 Z" fill="#1a5ad8" stroke="#0a2a80" stroke-width="1"/><circle cx="6" cy="9" r="2.5" fill="none" stroke="#bfe0ff"/></svg>
<div class="a tr" style="left:91px;top:264px;width:95px;height:13px;overflow:hidden"><div class="a nw" style="left:0px;top:0px;font-size:11px;color:#1e1e1e;transform:scaleX(0.9);transform-origin:0 0;">(-) Гидроцилиндр по</div></div>
<div class="pm p" style="left:55px;top:281px"></div>
<div class="a" style="left:65px;top:285px;width:4px;border-top:1px dotted #7a8088"></div>
<svg class="a" style="left:70px;top:278px" width="15" height="15" viewBox="0 0 15 15"><path d="M1,14 V5 L4,2 H6 L8,4 L11,5 L13,9 L14,14 Z" fill="#1a5ad8" stroke="#0a2a80" stroke-width="1"/><circle cx="6" cy="9" r="2.5" fill="none" stroke="#bfe0ff"/></svg>
<div class="a tr" style="left:91px;top:280px;width:95px;height:13px;overflow:hidden"><div class="a nw" style="left:0px;top:0px;font-size:11px;color:#1e1e1e;transform:scaleX(0.9);transform-origin:0 0;">(+) Площадка опера</div></div>
<div class="pm p" style="left:55px;top:298px"></div>
<div class="a" style="left:65px;top:302px;width:4px;border-top:1px dotted #7a8088"></div>
<svg class="a" style="left:70px;top:295px" width="15" height="15" viewBox="0 0 15 15"><path d="M1,14 V5 L4,2 H6 L8,4 L11,5 L13,9 L14,14 Z" fill="#1a5ad8" stroke="#0a2a80" stroke-width="1"/><circle cx="6" cy="9" r="2.5" fill="none" stroke="#bfe0ff"/></svg>
<div class="a tr" style="left:91px;top:297px;width:95px;height:13px;overflow:hidden"><div class="a nw" style="left:0px;top:0px;font-size:11px;color:#1e1e1e;transform:scaleX(0.9);transform-origin:0 0;">(+) Основной пульт у</div></div>
<div class="pm p" style="left:55px;top:315px"></div>
<div class="a" style="left:65px;top:319px;width:4px;border-top:1px dotted #7a8088"></div>
<svg class="a" style="left:70px;top:312px" width="15" height="15" viewBox="0 0 15 15"><path d="M1,14 V5 L4,2 H6 L8,4 L11,5 L13,9 L14,14 Z" fill="#1a5ad8" stroke="#0a2a80" stroke-width="1"/><circle cx="6" cy="9" r="2.5" fill="none" stroke="#bfe0ff"/></svg>
<div class="a tr" style="left:91px;top:314px;width:95px;height:13px;overflow:hidden"><div class="a nw" style="left:0px;top:0px;font-size:11px;color:#1e1e1e;transform:scaleX(0.9);transform-origin:0 0;">(+) Узел осевого кол</div></div>
<div class="pm p" style="left:55px;top:331px"></div>
<div class="a" style="left:65px;top:335px;width:4px;border-top:1px dotted #7a8088"></div>
<svg class="a" style="left:70px;top:328px" width="15" height="15" viewBox="0 0 15 15"><rect x="1" y="2" width="13" height="12" rx="3" fill="#1a70e0" stroke="#0a2a80"/><circle cx="7" cy="8" r="3.5" fill="none" stroke="#fff" stroke-width="1.3"/></svg>
<div class="a tr" style="left:91px;top:330px;width:95px;height:13px;overflow:hidden"><div class="a nw" style="left:0px;top:0px;font-size:11px;color:#1e1e1e;transform:scaleX(0.9);transform-origin:0 0;">(+) Мотор гидравлич</div></div>
<div class="pm p" style="left:55px;top:348px"></div>
<div class="a" style="left:65px;top:352px;width:4px;border-top:1px dotted #7a8088"></div>
<svg class="a" style="left:70px;top:345px" width="15" height="15" viewBox="0 0 15 15"><path d="M2,9 L7,5 L9,8 L4,12 Z" fill="#1a50c0"/><path d="M6,3 L10,1 L14,5 L12,9 L8,8 Z" fill="#3aa0f0" stroke="#0a3a90"/><path d="M1,11 L6,14 L9,11" fill="#1a50c0"/></svg>
<div class="a tr" style="left:91px;top:347px;width:95px;height:13px;overflow:hidden"><div class="a nw" style="left:0px;top:0px;font-size:11px;color:#1e1e1e;transform:scaleX(0.9);transform-origin:0 0;">(-) Шайба С.12.37 ГОС</div></div>
<div class="pm p" style="left:55px;top:365px"></div>
<div class="a" style="left:65px;top:369px;width:4px;border-top:1px dotted #7a8088"></div>
<svg class="a" style="left:70px;top:362px" width="15" height="15" viewBox="0 0 15 15"><path d="M2,9 L7,5 L9,8 L4,12 Z" fill="#1a50c0"/><path d="M6,3 L10,1 L14,5 L12,9 L8,8 Z" fill="#3aa0f0" stroke="#0a3a90"/><path d="M1,11 L6,14 L9,11" fill="#1a50c0"/></svg>
<div class="a tr" style="left:91px;top:364px;width:95px;height:13px;overflow:hidden"><div class="a nw" style="left:0px;top:0px;font-size:11px;color:#1e1e1e;transform:scaleX(0.9);transform-origin:0 0;">(-) Шпилька М12x1,25</div></div>
<div class="pm p" style="left:55px;top:381px"></div>
<div class="a" style="left:65px;top:385px;width:4px;border-top:1px dotted #7a8088"></div>
<svg class="a" style="left:70px;top:378px" width="15" height="15" viewBox="0 0 15 15"><path d="M2,9 L7,5 L9,8 L4,12 Z" fill="#1a50c0"/><path d="M6,3 L10,1 L14,5 L12,9 L8,8 Z" fill="#3aa0f0" stroke="#0a3a90"/><path d="M1,11 L6,14 L9,11" fill="#1a50c0"/></svg>
<div class="a tr" style="left:91px;top:380px;width:95px;height:13px;overflow:hidden"><div class="a nw" style="left:0px;top:0px;font-size:11px;color:#1e1e1e;transform:scaleX(0.9);transform-origin:0 0;">(-) Гайка М12x1,5-6Н</div></div>
<div class="pm p" style="left:37px;top:398px"></div>
<div class="a" style="left:47px;top:402px;width:5px;border-top:1px dotted #7a8088"></div>
<svg class="a" style="left:53px;top:395px" width="15" height="15" viewBox="0 0 15 15"><path d="M3,12 L11,3 Q13,1 14,4 L6,13 Q3,16 2,13 L9,5" fill="none" stroke="#2a3ad0" stroke-width="1.6"/></svg>
<div class="a tr" style="left:72px;top:397px;width:114px;height:13px;overflow:hidden"><div class="a nw" style="left:0px;top:0px;font-size:11px;color:#1e1e1e;transform:scaleX(0.9);transform-origin:0 0;">Сопряжения</div></div>
<div class="a" style="left:28px;top:772px;width:158px;height:15px;background:#eceef0;border-top:1px solid #e0e2e6"></div>
<div class="a" style="left:33px;top:778px;width:0;height:0;border:3px solid transparent;border-right:4px solid #444;border-left:0"></div>
<div class="a" style="left:178px;top:778px;width:0;height:0;border:3px solid transparent;border-left:4px solid #444;border-right:0"></div>
<div class="a" style="left:44px;top:773px;width:49px;height:13px;border:1px solid #9aa0a8;border-radius:3px;background:linear-gradient(#f8f8f8,#d8dadd)"></div>
<div class="a" style="left:65px;top:777px;width:6px;height:5px;border-left:1px solid #555;border-right:1px solid #555"><div class="a" style="left:1px;top:0;width:1px;height:5px;background:#555"></div></div>
<div class="a" style="left:27px;top:791px;width:57px;height:14px;background:#fff;border:1px solid #d6d9de;border-top:0"></div>
<div class="a nw" style="left:30px;top:793px;font-size:11px;color:#222;transform:scaleX(0.81);transform-origin:0 0;">Построение</div>
<div class="a nw" style="left:91px;top:793px;font-size:11px;color:#333;transform:scaleX(0.8);transform-origin:0 0;">Исполнения</div>
<div class="a nw" style="left:152px;top:793px;font-size:11px;color:#333;transform:scaleX(0.8);transform-origin:0 0;">Зоны</div>
<div class="a" style="left:194px;top:103px;width:1402px;height:705px;background:#fff;border-left:2px solid #85878a"></div>
<div class="a" style="left:195px;top:103px;width:1401px;height:2px;background:#8f8d7a"></div>
<svg class="a" style="left:0;top:0" width="1600" height="900" viewBox="0 0 1600 900">
<g stroke="#1a1a1a" stroke-width="0.8" stroke-linejoin="round">
<!-- TOWER BOX faces -->
<polygon points="903,178 1062,247 1062,445 903,445" fill="#ff0000"/>
<polygon points="1062,247 1191,193 1191,445 1062,445" fill="#c00000"/>
<!-- TIRE -->
<defs><linearGradient id="tread" x1="0" y1="0" x2="1" y2="1"><stop offset="0" stop-color="#3c3c3c"/><stop offset="0.6" stop-color="#343434"/><stop offset="1" stop-color="#262626"/></linearGradient>
<linearGradient id="cyl" x1="0" y1="0" x2="1" y2="1"><stop offset="0" stop-color="#c4d6ea"/><stop offset="1" stop-color="#7f96b0"/></linearGradient></defs>
<path d="M1193.0,187.0 C1214.8,177.5 1231.5,173.5 1251.0,173.0 C1270.5,172.5 1291.3,176.0 1310.0,184.0 C1328.7,192.0 1347.5,207.2 1363.0,221.0 C1378.5,234.8 1391.0,249.7 1403.0,267.0 C1415.0,284.3 1427.0,305.0 1435.0,325.0 C1443.0,345.0 1447.6,366.3 1451.0,387.0 C1454.4,407.7 1456.1,430.7 1455.6,449.0 C1455.1,467.3 1450.9,483.8 1448.0,496.7 C1445.1,509.6 1442.4,517.5 1438.0,526.7 C1433.6,535.9 1428.6,544.2 1421.7,551.7 C1414.8,559.2 1406.5,565.9 1396.7,571.7 C1386.9,577.5 1374.1,582.0 1363.0,586.7 C1351.9,591.4 1341.0,596.1 1330.0,600.0 C1319.0,603.9 1307.9,608.0 1296.7,610.0 C1285.5,612.0 1272.0,612.5 1263.0,611.7 C1254.0,610.9 1256.8,613.6 1243.0,605.0 C1229.2,596.4 1203.8,590.8 1180.0,560.0 C1156.2,529.2 1116.2,458.3 1100.0,420.0 C1083.8,381.7 1079.7,361.7 1083.0,330.0 C1086.3,298.3 1101.7,253.8 1120.0,230.0 C1138.3,206.2 1171.2,196.5 1193.0,187.0 Z" fill="url(#tread)"/>
<path d="M1383,488 C1375,530 1360,570 1333,590" fill="none" stroke="#111" stroke-width="0.7"/>
<path d="M1365,505 C1355,545 1330,585 1285,602" fill="none" stroke="#111" stroke-width="0.7"/>
<ellipse cx="1226" cy="402" rx="136" ry="205" transform="rotate(-20 1226 402)" fill="#464646"/>
<ellipse cx="1219" cy="401" rx="125" ry="196" transform="rotate(-20 1219 401)" fill="#3c3c3c" stroke="#222" stroke-width="0.7"/>
<ellipse cx="1221" cy="398" rx="118" ry="182" transform="rotate(-21 1221 398)" fill="#383838"/>
<ellipse cx="1218" cy="385" rx="80" ry="112" transform="rotate(-28 1218 385)" fill="#2e2e2e"/>
<ellipse cx="1220" cy="388" rx="68" ry="98" transform="rotate(-30 1220 388)" fill="#6e6e6e"/>
<ellipse cx="1218" cy="388" rx="62" ry="90" transform="rotate(-30 1218 388)" fill="none" stroke="#333" stroke-width="0.8"/>
<ellipse cx="1234" cy="357" rx="3.5" ry="4" fill="#fff" stroke="none"/>
<!-- TOWER LID -->
<polygon points="1028.6,113.3 900.8,168 1063,237.5 1192.5,183.3" fill="#ff0000"/>
<polygon points="900.8,168 1063,237.5 1063,248 901,178" fill="#f00000"/>
<polygon points="1063,237.5 1192.5,183.3 1192,193 1063,248" fill="#c80000"/>
<rect x="1067" y="233" width="17" height="11" fill="#d8c040"/>
<rect x="1067" y="245" width="17" height="12" fill="#3a90a0"/>
<rect x="1171" y="188" width="15" height="9" fill="#d8c040"/>
<!-- inner back plate red -->
<polygon points="921,343 1381,390 1415,447 1350,505 1240,600 1150,650 1010,712 921,460" fill="#ff0000"/>
<polygon points="902,346 921,349 921,445 902,445" fill="#d00000"/>
<!-- BACK GREY BEAM -->
<polygon points="758,395 900,334 927,338 927,344 773,406" fill="#b8b8b8"/>
<polygon points="773,406 927,344 927,347 775,410" fill="#777"/>
<polygon points="773,407 902,354 902,400 837,425 773,418" fill="#1e1e0e"/>

<!-- upper purple beam -->
<polygon points="903,333 919,327 1100,341 1330,369 1381,375 1385,390 1330,384 1100,359 927,343" fill="#6c6cae"/>
<polygon points="903,333 919,327 1100,341 1330,369 1381,375 1383,383 1330,377 1100,351 927,338" fill="#7e7ebe"/>
<!-- green plate -->
<polygon points="1220,472 1288,444 1327,512 1355,499 1358,507 1288,542 1185,582 1150,600 1227,523" fill="#30b030"/>
<!-- olive vertical -->
<polygon points="1138,430 1159,430 1159,470 1138,470" fill="#7a7a28"/>
<!-- cylinders -->
<polygon points="1011,443 1065,397 1107,425 1084,451" fill="url(#cyl)"/>
<polygon points="1084,451 1155,361 1190,395 1127,455" fill="url(#cyl)"/>
<ellipse cx="1084" cy="414" rx="20" ry="26" transform="rotate(40 1084 414)" fill="#b040c0"/>
<ellipse cx="1090" cy="414" rx="9" ry="11" fill="#333"/><ellipse cx="1100" cy="400" rx="19" ry="21" transform="rotate(40 1100 400)" fill="#30e030"/>
<ellipse cx="1097" cy="401" rx="9" ry="12" transform="rotate(30 1097 401)" fill="#1e3a40"/><ellipse cx="1098" cy="401" rx="6" ry="9" transform="rotate(30 1098 401)" fill="#40c8d8" stroke="#124"/>
<ellipse cx="1179" cy="375" rx="20" ry="26" transform="rotate(40 1179 375)" fill="#b040c0"/>
<ellipse cx="1184" cy="373" rx="9" ry="11" fill="#333"/><ellipse cx="1194" cy="359" rx="20" ry="22" transform="rotate(40 1194 359)" fill="#30e030"/>
<ellipse cx="1191" cy="361" rx="9" ry="12" transform="rotate(30 1191 361)" fill="#1e3a40"/><ellipse cx="1192" cy="361" rx="6" ry="9" transform="rotate(30 1192 361)" fill="#40c8d8" stroke="#124"/>
<polygon points="1124,400 1138,393 1143,402 1130,411" fill="#dcdcf4"/>
<!-- right lug -->
<path d="M1380,387 L1392,383 L1430,383 C1442,388 1452,398 1454,412 C1455,424 1448,433 1439,437 L1424,444 L1414,449 Z" fill="#b0b0b0"/>
<polygon points="1380,387 1392,383 1424,444 1414,449" fill="#8c8c8c"/>
<ellipse cx="1422" cy="413" rx="6" ry="9" transform="rotate(-15 1422 413)" fill="#8a8a8a"/>
<path d="M1430,383 C1442,388 1452,398 1454,412 C1455,424 1448,433 1439,437" fill="none" stroke="#e00000" stroke-width="1.2"/>
</g>
<!-- UNDERFRAME -->
<g stroke="#1a1a1a" stroke-width="0.8" stroke-linejoin="round">
<polygon points="980,729 1227,523 1233,531 1165,575 1176,596 1322,534 1358,503 1434,447 1356,513 1244,606 1210,630 1180,654 1160,660 1130,684 1100,698 1060,708 1016,718 984,731" fill="#505050"/>
<polygon points="1000,724 1060,703 1100,692 1130,678 1160,655 1180,648 1210,624 1244,601 1300,552 1230,585 1150,632 1060,688" fill="#787878" stroke="none"/>
<polygon points="1032,698 1227,523 1233,531 1196,575 1126,622" fill="#1e1e1a"/>
<polygon points="1165,575 1233,528 1248,506 1327,512 1358,503 1322,534 1176,596" fill="#30b030"/>
<polygon points="1126,618 1176,596 1322,534 1318,545 1160,609" fill="#808080"/>
<polygon points="1237,525 1255,519 1265,537 1247,544" fill="#ff0000"/>
<path d="M1228,531 C1238,527 1250,530 1255,540 L1238,548 C1232,545 1228,538 1228,531 Z" fill="#6a6a6a"/>
<polygon points="1064,680 1126,624 1144,622 1174,636 1105,676" fill="#b8b8b8"/>
<polygon points="1144,622 1160,610 1190,626 1174,636" fill="#6e6e6e"/>
<polygon points="1030,700 1126,620 1130,626 1036,705" fill="#7a7a28"/>
<polygon points="1160,610 1300,552 1292,565 1190,626" fill="#ff0000"/>
<polygon points="1176,636 1299,549 1304,553 1182,640" fill="#7a7a28"/>
<polygon points="1124,628 1160,609 1161,615 1128,631" fill="#1a20c8"/>
<polygon points="1188,632 1350,505 1430,442 1434,447 1354,510 1244,603 1210,628 1192,638" fill="#1c1c1c"/>
<polygon points="984,731 1016,718 1060,708 1100,698 1130,684 1160,660 1180,654 1210,630 1244,606 1240,600 1205,624 1175,646 1155,654 1126,677 1095,690 1058,700 1014,710 990,723" fill="#3e3e3e"/>
<polygon points="980,729 1227,523 1233,531 985,735" fill="#181818"/>
</g>
<g stroke="#1a1a1a" stroke-width="0.8" stroke-linejoin="round">
<!-- FRONT RED PLATE -->
<path d="M773,427 L1187,477 C1205,482 1225,492 1230,505 C1233,515 1230,522 1227,523 L980,729 L973,714 L740,640 L748,475 L773,448 Z" fill="#ff0000"/>
<path d="M1187,469 C1210,470 1236,485 1242,500 C1246,515 1240,528 1233,531 L1227,523 C1232,515 1232,500 1218,488 C1208,482 1195,480 1187,480 Z" fill="#a8a8a8"/>
<ellipse cx="1212" cy="505" rx="5" ry="7" transform="rotate(-20 1212 505)" fill="#c8c8c8"/>
<ellipse cx="997" cy="605" rx="38.7" ry="52" transform="rotate(-15 997 605)" fill="#646464"/>
<!-- lower purple beam -->
<polygon points="773,417 1187,465 1190,478 773,428" fill="#6c6cae"/>
<polygon points="773,417 1187,465 1188,471 773,422" fill="#7e7ebe"/>
</g>

<g fill="#2a2a2a" stroke="#000" stroke-width="0.4"><circle cx="950.7" cy="364" r="1.6"/><circle cx="1014.7" cy="374.7" r="1.6"/><circle cx="950.7" cy="432" r="1.6"/><circle cx="1123" cy="365" r="1.6"/><circle cx="1224.7" cy="409" r="1.6"/><circle cx="1208.7" cy="445" r="1.6"/><circle cx="1214" cy="462.7" r="1.6"/><ellipse cx="1062" cy="475" rx="3.5" ry="5" fill="#bbb" stroke="#222" stroke-width="0.8"/></g>
<!-- FLOOR + BASE -->
<g stroke="#1a1a1a" stroke-width="0.8" stroke-linejoin="round">
<polygon points="556,656 826,770 856,770 977,718 977,729 856,782 824,782 556,668" fill="#eeeaa8"/>
<polygon points="856,770 977,718 977,729 856,782" fill="#dedA98"/>
<polygon points="626,684 748,632 977,712 977,718 856,770 826,770 556,656 626,684" fill="#f2f2f2"/>
<polyline points="640,690 850,760" fill="none" stroke="#555" stroke-width="0.6" stroke-dasharray="3,2"/>
<polyline points="700,660 960,740" fill="none" stroke="#555" stroke-width="0.6" stroke-dasharray="3,2"/>
<polyline points="760,640 970,705" fill="none" stroke="#888" stroke-width="0.6" stroke-dasharray="3,2"/>
<polyline points="812,736 920,688" fill="none" stroke="#555" stroke-width="0.6" stroke-dasharray="3,2"/>
<polyline points="852,754 972,706" fill="none" stroke="#555" stroke-width="0.6" stroke-dasharray="3,2"/>
<polygon points="957,692 970,690 970,712 957,714" fill="#1030d0"/>
<!-- CONSOLE -->
<polygon points="556,317 584,329 620,435 654,455 654,500 626,522 626,684 556,658" fill="#ff0000"/>
<polygon points="556,317 676,267 704,278 584,329" fill="#ff1010"/>
<polygon points="584,329 704,278 735,385 620,435" fill="#cc0000"/>
<polygon points="620,435 735,385 773,407 654,455" fill="#ff0000"/>
<polygon points="640,424 734,390 751,411 670,445" fill="#e8e8e8"/>
<polygon points="654,455 773,407 773,452 654,500" fill="#c80000"/>
<polygon points="654,500 773,452 748,474 626,522" fill="#d80000"/>
<polygon points="626,522 748,474 748,632 626,684" fill="#b80000"/>
<line x1="604" y1="465" x2="604" y2="668" stroke="#600" stroke-width="0.6"/>
<!-- display -->
<polygon points="629,321 668,307 677.5,339 637,357" fill="#a8c0e0"/>
<polygon points="633,325 664,313 669,330 637,342" fill="#c8d0d8" stroke="#556" stroke-width="0.5"/>
<!-- handles -->
<polygon points="598,352 618,334 622,340 602,358" fill="#555"/>
<polygon points="683,302 708,309 706,316 681,309" fill="#555"/>
<!-- joysticks -->
<path d="M655,436 L655,420 C655,414 659,411 663,411 C667,411 671,414 671,420 L671,436 Z" fill="#222"/>
<path d="M688,423 L688,403 C688,398 692,396 696,396 C700,396 704,398 704,403 L704,423 Z" fill="#222"/>
<path d="M720,408 L720,386 C720,381 724,379 728,379 C732,379 737,381 737,386 L737,408 Z" fill="#222"/>
</g>
<g stroke="#111" stroke-width="0.6">
<circle cx="620" cy="373" r="5" fill="#d01010"/><circle cx="626" cy="371" r="5" fill="#e01818"/>
<circle cx="637" cy="374" r="4.5" fill="#20a030"/>
<circle cx="651" cy="368" r="4.5" fill="#666"/><circle cx="663" cy="364" r="4.5" fill="#666"/>
<circle cx="675" cy="359" r="4.5" fill="#666"/><circle cx="691" cy="352" r="4.5" fill="#20a030"/>
<circle cx="624" cy="405" r="4.5" fill="#20a030"/><circle cx="637" cy="400" r="4.5" fill="#20a030"/>
<circle cx="651" cy="394" r="4.5" fill="#20a030"/><circle cx="664" cy="388" r="4.5" fill="#c01010"/>
<circle cx="678" cy="382" r="4.5" fill="#666"/><circle cx="692" cy="377" r="4.5" fill="#666"/>
<circle cx="705" cy="372" r="4.5" fill="#666"/><circle cx="718" cy="365" r="4.5" fill="#20a030"/>
<circle cx="708" cy="334" r="5" fill="#222"/><circle cx="716" cy="332" r="4" fill="#333"/>
</g>
<g fill="#3a3a3a" stroke="#000" stroke-width="0.4"><circle cx="590" cy="328" r="1.7"/><circle cx="645.6" cy="304" r="1.7"/><circle cx="672" cy="293" r="1.7"/><circle cx="701" cy="279" r="1.7"/><circle cx="617.8" cy="316.7" r="1.7"/><circle cx="604" cy="379" r="1.7"/><circle cx="734.4" cy="376.4" r="1.7"/><circle cx="676" cy="405.6" r="1.7"/><circle cx="704" cy="394.4" r="1.7"/><circle cx="651" cy="416.7" r="1.7"/><circle cx="617.8" cy="425" r="1.7"/><circle cx="623" cy="427.8" r="1.7"/><circle cx="766" cy="454" r="1.7"/><circle cx="713.6" cy="475" r="1.7"/><circle cx="745.6" cy="477.8" r="1.7"/><circle cx="630" cy="526" r="1.7"/><circle cx="630" cy="600" r="1.7"/><circle cx="632" cy="674" r="1.7"/><circle cx="688" cy="656" r="1.7"/><circle cx="746" cy="550" r="1.7"/><circle cx="746" cy="478" r="1.7"/><circle cx="660" cy="498" r="1.7"/><circle cx="556" cy="420" r="1.7"/><circle cx="556" cy="540" r="1.7"/><circle cx="556" cy="640" r="1.7"/></g>
<!-- CABINET -->
<g stroke="#1a1a1a" stroke-width="0.8" stroke-linejoin="round">
<polygon points="616,221 623,214 630,264 666,262 664,273 632,288 625,285 618,260" fill="#a80000"/>
<polygon points="630,264 666,262 668,272 634,286" fill="#b00000"/>
<polygon points="622.7,213.7 651.3,201 672,206.3 644,219" fill="#a0a0a0"/>
<polygon points="622.7,213.7 644,219 648,268.3 630,264" fill="#acacac"/>
<polygon points="644,219 672,206.3 678,257 648,268" fill="#8c8c8c"/>
<defs><pattern id="grille" width="2.2" height="2.2" patternUnits="userSpaceOnUse"><rect width="2.2" height="2.2" fill="#8c8c8c"/><rect width="1.3" height="1.3" fill="#2a2a2a"/></pattern></defs><polygon points="652,224 668,219 670,243 654,248" fill="url(#grille)" stroke="none"/>
<polygon points="653,258 659,256 660,260 654,262" fill="#ccc" stroke="#222" stroke-width="0.5"/>
<circle cx="670" cy="253" r="3.5" fill="#222"/>
<polygon points="636,235 641,236 643,252 638,251" fill="#c0c0c0" stroke-width="0.5"/>
</g>
<!-- SEAT backstuff -->
<g stroke="#1a1a1a" stroke-width="0.8" stroke-linejoin="round">
<polygon points="747,492 754,494 754,512 747,512" fill="#fff" stroke="none"/>
<polygon points="747,511 771,505 784,518 752,524" fill="#bcbcbc"/>
<polygon points="747,511 752,524 752,576 747,578" fill="#c4c4c4"/>
<polygon points="752,524 784,518 784,571 752,576" fill="#b4b4ec"/>
<line x1="752" y1="540" x2="784" y2="551" stroke="#556" stroke-width="0.6"/>
<path d="M751,495 C754,508 772,520 797,527 C800,522 797,516 790,512 L772,505 C762,502 755,499 751,495 Z" fill="#b8b8f0"/>
</g>
<!-- PIPES red -->
<g fill="none" stroke-linecap="round" stroke-linejoin="round">
<path d="M761,662 L761,718 Q761,728 772,732 L848,764 Q856,767 856,757 L856,700 M761,662 L856,700 M856,716 L912,736 Q921,739 921,730 L921,668 M810,742 L870,718 M826,690 Q830,700 845,706" stroke="#3a0000" stroke-width="7.5"/>
<path d="M761,662 L761,718 Q761,728 772,732 L848,764 Q856,767 856,757 L856,700 M761,662 L856,700 M856,716 L912,736 Q921,739 921,730 L921,668 M810,742 L870,718 M826,690 Q830,700 845,706" stroke="#c81a1a" stroke-width="5.5"/>
</g>
<!-- SEAT -->
<g stroke="#1a1a1a" stroke-width="0.8" stroke-linejoin="round">
<path d="M804,629 L804,530 C805,518 810,512 815,511 L844,497 L910,469 C916,467 921,466 925,467 C932,469 936,473 938,478 C941,488 943,498 943,508 L943,599 C942,606 937,612 932,614 L895,629 L844,643 L811,643 Z" fill="#38107a"/>
<path d="M804,629 L804,530 C805,518 810,512 815,511 L844,497 L910,469 C916,467 921,466 925,467 L850,505 C838,512 832,520 832,535 L832,643 L811,643 Z" fill="#5a2ac4"/>
<path d="M701.7,587.5 L718,587.5 L797,550 L804,549 L804,660 L792.6,662 L736.7,636 L702.4,608 Q699,598 701.7,587.5 Z" fill="#5a22c8"/>
<path d="M718,587.5 L797,550 L804,549 L804,628 L799,628 C780,620 765,612 752,604.6 C740,598 728,592 718,587.5 Z" fill="#4c14b0"/>
<path d="M702,598 C720,612 760,630 803,646" fill="none" stroke="#2a0a70" stroke-width="0.6"/>
</g>
<!-- PIPES yellow -->
<g fill="none" stroke-linecap="round" stroke-linejoin="round">
<path d="M870,588 L870,690 M883,585 L883,688 M937,555 L937,668 Q937,676 928,672 L818,647 M756,651 L862,694 Q870,697 872,690 M884,610 L936,596 M822,650 L920,672 M836,641 L884,652" stroke="#4a4410" stroke-width="8"/>
<path d="M870,588 L870,690 M883,585 L883,688 M937,555 L937,668 Q937,676 928,672 L818,647 M756,651 L862,694 Q870,697 872,690 M884,610 L936,596 M822,650 L920,672 M836,641 L884,652" stroke="#d2cc3a" stroke-width="6"/>
<path d="M931,552 L931,660" stroke="#4a4410" stroke-width="5"/><path d="M931,552 L931,660" stroke="#c0ba34" stroke-width="3"/>
</g>
<g stroke="#1a1a1a" stroke-width="0.7">
<polygon points="848,568 868,565 874,622 870,628 856,625 850,610" fill="#50b8b8"/>
<polygon points="918,540 932,537 934,585 920,588" fill="#50b8b8"/>
<path d="M829,585 C830,577 845,574 851,580 L851,598 C846,605 834,604 830,598 Z" fill="#262626"/>
<polygon points="897,627 916,621 918,633 899,639" fill="#8a30c0"/>
</g>
<!-- AXES -->
<g stroke-linecap="round">
<line x1="255" y1="744" x2="255" y2="708" stroke="#78c878" stroke-width="3"/>
<polygon points="251,714 255,702 259,714" fill="#78c878"/>
<line x1="255" y1="744" x2="230" y2="755" stroke="#5a80d8" stroke-width="3"/>
<polygon points="234,749 223,757 237,756" fill="#5a80d8"/>
<line x1="255" y1="744" x2="280" y2="755" stroke="#e06868" stroke-width="3"/>
<polygon points="276,749 288,757 274,756" fill="#e06868"/>
<circle cx="255" cy="744" r="5" fill="#f0f070" stroke="#d8d860" stroke-width="0.5"/>
</g>
<text x="251" y="699" font-size="10" fill="#80c080" font-family="Liberation Serif">Y</text>
<text x="213" y="764" font-size="10" fill="#6080d0" font-family="Liberation Serif">Z</text>
<text x="289" y="764" font-size="10" fill="#e07070" font-family="Liberation Serif">X</text>
</svg>
<div class="a" style="left:23px;top:814px;width:2px;height:50px;border-left:1px dotted #9aa2ac"></div>
<div class="a" style="left:27px;top:816px;width:1568px;height:29px;background:linear-gradient(#fff,#fdfdfd 45%,#eef0f2);border:1px solid #a2a8b0"></div>
<div class="a" style="left:25px;top:867px;width:131px;height:17px;background:linear-gradient(90deg,#fff6d0,#fbe6a2);border:1px solid #e2d08c;border-bottom:0"></div>
<svg class="a" style="left:26px;top:868px" width="15" height="15"><rect x="1" y="1" width="12" height="13" fill="#1a8ae0" stroke="#0a3a80"/><path d="M3,5 H11 M3,9 H11" stroke="#fff" stroke-width="1.4"/></svg>
<div class="a nw" style="left:52px;top:870px;font-size:11px;color:#6a6450;transform:scaleX(0.835);transform-origin:0 0;">Менеджер библиотек</div>
<div class="a" style="left:0;top:884px;width:1600px;height:16px;background:linear-gradient(#f1f3f5,#d2d6dc);border-top:1px solid #a0a6ae"></div>
<div class="a" style="left:0;top:898px;width:1600px;height:2px;background:#5a6680"></div>
<div class="a" style="left:1527px;top:886px;width:1px;height:12px;background:#a8aeb6"></div>
<div class="a nw" style="left:4px;top:887px;font-size:11px;color:#222;transform:scaleX(0.84);transform-origin:0 0;">Щелкните левой кнопкой мыши на объекте для его выделения (вместе с Ctrl - добавить к выделенным)</div>
</body></html>
